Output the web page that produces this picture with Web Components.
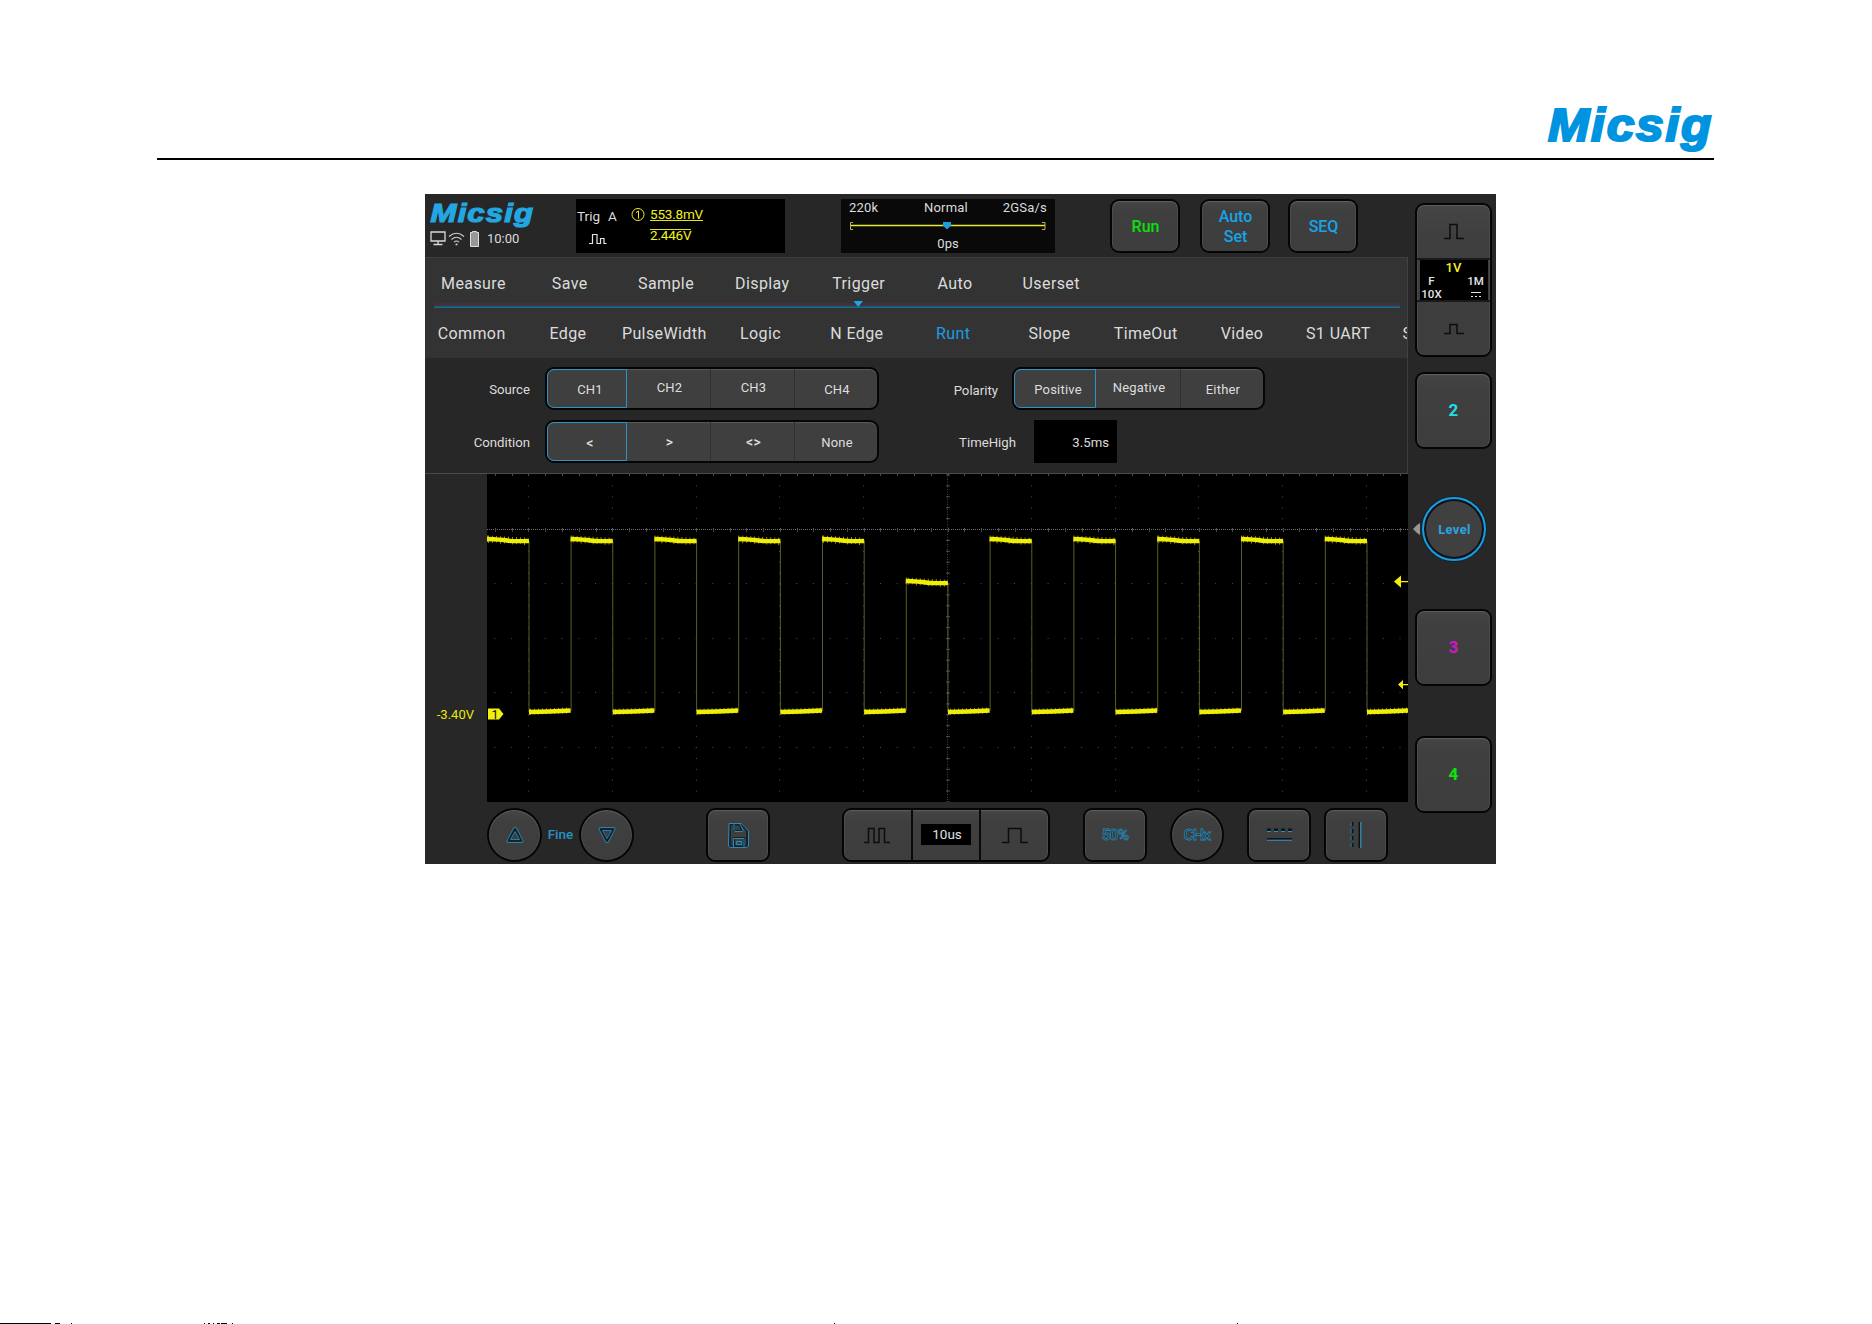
<!DOCTYPE html>
<html lang="en">
<head>
<meta charset="utf-8">
<title>Micsig</title>
<style>
  html, body { margin: 0; padding: 0; }
  body {
    width: 1872px;
    height: 1324px;
    overflow: hidden;
    background: #fff;
    font-family: Roboto, "Liberation Sans", sans-serif;
  }
</style>
</head>
<body>
<manual-page>
  <scope-device></scope-device>
</manual-page>

<script>
class MicsigLogo extends HTMLElement{
    constructor(){
        super();
        this.attachShadow({ mode: "open" });
    }
    connectedCallback(){
        this.shadowRoot.innerHTML = `
        <style>
        :host{ display: block; width: 166px; height: 46px; color: #0093e0; }
        svg{ display: block; width: 100%; height: 100%; overflow: visible; }
        text{ font: italic 700 46px "Liberation Sans", sans-serif; letter-spacing: 1.6px; fill: currentColor; stroke: currentColor; stroke-width: 2.2; }
        </style>
        <svg viewBox="0 0 166 46" preserveAspectRatio="none">
            <text x="1" y="33.5" textLength="165" lengthAdjust="spacingAndGlyphs">Micsig</text>
        </svg>
        `;
    }
}
window.customElements.define("micsig-logo", MicsigLogo);

class ManualPage extends HTMLElement{
    constructor(){
        super();
        this.attachShadow({ mode: "open" });
    }
    connectedCallback(){
        this.shadowRoot.innerHTML = `
        <style>
        :host{ display: flex; flex-direction: column; width: 1872px; height: 1324px; }
        header{
            display: flex;
            justify-content: flex-end;
            align-items: flex-end;
            box-sizing: border-box;
            height: 160px;
            margin: 0 158px 34px 157px;
            padding: 0 1px 5px 0;
            border-bottom: 2px solid #000;
        }
        main{ padding-left: 425px; flex: 1; }
        .edge{ display: block; width: 1872px; height: 1px; }
        </style>
        <header><micsig-logo></micsig-logo></header>
        <main><slot></slot></main>
        <svg class="edge" viewBox="0 0 1872 1" shape-rendering="crispEdges">
            <path d="M0 0h51v1H0zM55 0h5v1h-5zM71 0h1v1h-1zM204 0h1v1h-1zM208 0h2v1h-2zM213 0h1v1h-1zM217 0h3v1h-3zM221 0h6v1h-6zM232 0h1v1h-1zM834 0h1v1h-1zM1237 0h1v1h-1z"/>
        </svg>
        `;
    }
}
window.customElements.define("manual-page", ManualPage);

// raised key: variants square (default) and round
class ScopeKey extends HTMLElement{
    constructor(){
        super();
        this.attachShadow({ mode: "open" });
    }
    connectedCallback(){
        this.shadowRoot.innerHTML = `
        <style>
        :host{
            display: flex;
            align-items: center;
            justify-content: center;
            box-sizing: border-box;
            flex: none;
            width: 64px;
            height: 54px;
            border: 2px solid #050505;
            border-radius: 9px;
            background: linear-gradient(#454545, #3f3f3f 20%, #3d3d3d);
            box-shadow: inset 0 1px 1px #606060, inset 1px 0 1px #4c4c4c, inset -1px 0 1px #4c4c4c;
            text-align: center;
            font-weight: 500;
            font-size: 16px;
            line-height: 20px;
            color: #17a3e8;
        }
        :host([round]){ width: 54px; border-radius: 50%; }
        :host([wide]){ width: 70px; padding: 1px 0 0 1px; }
        :host([channel]){ width: 77px; height: 77px; padding-bottom: 2px; font-weight: 700; font-size: 17px; }
        </style>
        <slot></slot>
        `;
    }
}
window.customElements.define("scope-key", ScopeKey);

class ScopeTabs extends HTMLElement{
    constructor(){
        super();
        this.attachShadow({ mode: "open" });
    }
    connectedCallback(){
        let items = this.getAttribute("items").split(",");
        let active = this.getAttribute("active");
        let fa = items.map(t => `<span class="${t == active ? "on" : ""}">${t}</span>`).join("");
        this.shadowRoot.innerHTML = `
        <style>
        :host{ display: flex; overflow: hidden; height: 50px; font-size: 16px; letter-spacing: .4px; color: #dcdcdc; }
        span{ flex: none; width: 96.3px; line-height: 52px; text-align: center; white-space: nowrap; }
        :host([sub]) .on{ color: #1b9ee2; }
        span:nth-of-type(11){ text-align: left; text-indent: 16px; }
        </style>
        ${fa}
        `;
    }
}
window.customElements.define("scope-tabs", ScopeTabs);

class ScopeSegment extends HTMLElement{
    constructor(){
        super();
        this.attachShadow({ mode: "open" });
    }
    connectedCallback(){
        let items = this.getAttribute("items").split(",");
        this.shadowRoot.innerHTML = `
        <style>
        :host{
            display: flex;
            box-sizing: border-box;
            height: 43px;
            border: 2px solid #050505;
            border-radius: 9px;
            background: #3f3f3f;
            box-shadow: inset 0 1px 1px #5a5a5a;
            font-size: 13px;
            letter-spacing: .2px;
            color: #dedede;
        }
        span{
            display: flex;
            flex: none;
            align-items: center;
            justify-content: center;
            box-sizing: border-box;
            width: var(--cell, 84px);
            padding-top: 2px;
            padding-left: 2px;
            border-right: 1px solid #303030;
        }
        span:first-of-type{ width: var(--first, 80px); padding-left: 6px; }
        span:last-of-type{ width: 82px; border-right: 0; }
        span:nth-of-type(2), span:nth-of-type(3):not(:last-of-type){ padding-bottom: var(--lift, 4px); }
        .on{ border: 1px solid #2b94c4; border-radius: 7px 0 0 7px; }
        .sign{ font-weight: 500; font-size: 14px; }
        </style>
        `;
        items.forEach((t, i) => {
            let s = document.createElement("span");
            s.textContent = t;
            if (i == 0) s.classList.add("on");
            if (/[<>]/.test(t)) s.classList.add("sign");
            this.shadowRoot.appendChild(s);
        });
    }
}
window.customElements.define("scope-segment", ScopeSegment);

// top strip: status, trigger info, timebase, run keys
class ScopeTop extends HTMLElement{
    constructor(){
        super();
        this.attachShadow({ mode: "open" });
    }
    connectedCallback(){
        this.shadowRoot.innerHTML = `
        <style>
        :host{ display: flex; height: 63px; box-sizing: border-box; padding: 5px 50px 0 5px; color: #dcdcdc; font-size: 13px; }
        .brand{ width: 146px; padding-top: 4px; }
        micsig-logo{ width: 104px; height: 26px; color: #22a7e2; }
        .status{ display: flex; align-items: center; height: 17px; margin-top: 1px; font-size: 13px; }
        .status svg{ display: block; }
        .trig{ display: grid; grid-template-columns: 29px 25px 19px 1fr; grid-template-rows: 29px 20px; box-sizing: border-box; width: 209px; height: 54px; padding-left: 1px; background: #000; font-size: 13.5px; }
        .trig span{ line-height: 35px; }
        .trig .y{ color: #f2f21c; }
        .trig .u{ justify-self: start; height: 13px; margin-top: 8px; line-height: 14px; border-bottom: 1px solid #e4e41c; letter-spacing: -.2px; }
        .trig .o{ justify-self: start; height: 13px; margin-top: 1px; line-height: 11px; border-top: 1px solid #e4e41c; letter-spacing: -.2px; }
        .trig .icon{ grid-column: 1 / 4; margin: 5px 0 0 12px; }
        .base{ display: flex; flex-direction: column; box-sizing: border-box; width: 214px; height: 54px; margin-left: 56px; padding: 0 8px; background: #090909; font-size: 13px; }
        .base div{ display: grid; grid-template-columns: 54px 1fr 58px; height: 18px; line-height: 18px; letter-spacing: .2px; text-align: center; }
        .base div :first-child{ text-align: left; }
        .base div :last-child{ text-align: right; }
        .base p{ margin: 0; text-align: center; line-height: 16px; }
        .base svg{ display: block; margin: 4px 0 6px; }
        .run{ margin-left: 55px; color: #0be00b; }
        .auto{ margin-left: 20px; }
        .seq{ margin-left: 18px; }
        </style>
        <div class="brand">
            <micsig-logo></micsig-logo>
            <div class="status">
                <svg style="margin-right:2px" width="16" height="15" fill="none" stroke="#d8d8d8" stroke-width="1.3">
                    <path d="M1 1h14v9H1zM8 10v3M3.500 13.500h9"/>
                </svg>
                <svg style="margin-right:5px" width="17" height="15" fill="none" stroke="#cfcfcf" stroke-width="1.1">
                    <path d="M1 5.500Q8.500 -1 16 5.500M3.500 8.500Q8.500 4 13.500 8.500M6 11Q8.500 9 11 11"/>
                    <path fill="#cfcfcf" stroke="none" d="M7.600 12.500h1.800v1.800H7.600z"/>
                </svg>
                <svg style="margin-right:8px" width="9" height="16">
                    <path fill="#979797" stroke="#dedede" d="M.5 1.500h2v-1h4v1h2v14h-8z"/>
                </svg>
                10:00
            </div>
        </div>
        <div class="trig">
            <span>Trig</span><span style="padding-left:2px">A</span>
            <svg style="margin:8px 0 0" width="15" height="15" fill="none" stroke="#f2f21c">
                <circle cx="7" cy="7.500" r="6"/><path d="M5 5.500 7.500 4v7.500"/>
            </svg>
            <span class="y u">553.8mV</span>
            <svg class="icon" width="18" height="12" fill="none" stroke="#e4e4e4" stroke-width="1.200">
                <path d="M0 10.500h3.500v-9H8v9h3.500v-5H15v5h2.500"/>
            </svg>
            <span class="y o">2.446V</span>
        </div>
        <div class="base">
            <div><span>220k</span><span>Normal</span><span>2GSa/s</span></div>
            <svg width="198" height="9" fill="none">
                <path stroke="#e8e838" stroke-width="1.300" d="M1 4.500h195"/>
                <path stroke="#b8b84a" d="M4 1.500H1.500v7H4M193 1.500h3v7h-3"/>
                <path fill="#1c9ddd" d="M94 1h8v3.500l-4 4-4-4z"/>
            </svg>
            <p>0ps</p>
        </div>
        <scope-key wide class="run">Run</scope-key>
        <scope-key wide class="auto">Auto<br>Set</scope-key>
        <scope-key wide class="seq">SEQ</scope-key>
        `;
    }
}
window.customElements.define("scope-top", ScopeTop);

class ScopeMenu extends HTMLElement{
    constructor(){
        super();
        this.attachShadow({ mode: "open" });
    }
    connectedCallback(){
        this.shadowRoot.innerHTML = `
        <style>
        :host{ display: block; box-sizing: border-box; height: 101px; background: #333; border-top: 1px solid #3e3e3e; border-right: 1px solid #424242; }
        .line{ display: block; margin-left: 9px; }
        scope-tabs[sub]{ margin-left: -1.5px; }
        .first{ height: 43px; padding-left: .3px; overflow: hidden; }
        </style>
        <div class="first"><scope-tabs items="Measure,Save,Sample,Display,Trigger,Auto,Userset" active="Trigger"></scope-tabs></div>
        <svg class="line" width="966" height="7">
            <path fill="#41303f" d="M0 2h966v3H0z"/>
            <path fill="#0d82ad" d="M0 5.500h966v1.200H0z"/>
            <path fill="#18a7ee" d="M419.500 0h9.500l-4.700 6z"/>
        </svg>
        <scope-tabs sub items="Common,Edge,PulseWidth,Logic,N Edge,Runt,Slope,TimeOut,Video,S1 UART,S" active="Runt"></scope-tabs>
        `;
    }
}
window.customElements.define("scope-menu", ScopeMenu);

class ScopePanel extends HTMLElement{
    constructor(){
        super();
        this.attachShadow({ mode: "open" });
    }
    connectedCallback(){
        this.shadowRoot.innerHTML = `
        <style>
        :host{
            display: grid;
            grid-template-columns: 105px 334px 104px 1fr;
            grid-template-rows: 43px 43px;
            column-gap: 15px;
            row-gap: 10px;
            box-sizing: border-box;
            height: 116px;
            padding-top: 9px;
            border-right: 1px solid #3c3c3c;
            border-bottom: 1px solid #4a4a4a;
            font-size: 13.2px;
            color: #dcdcdc;
        }
        label{ text-align: right; line-height: 45px; }
        .pol{ line-height: 48px; }
        .time{ margin-right: -18px; }
        .cond{ --lift: 1px; }
        .three{ --first: 82px; --cell: 85px; margin-left: -1px; }
        scope-segment{ width: max-content; }
        .val{ box-sizing: border-box; width: 83px; margin-left: 21px; padding-right: 8px; background: #000; text-align: right; line-height: 45px; }
        </style>
        <label>Source</label>
        <scope-segment items="CH1,CH2,CH3,CH4"></scope-segment>
        <label class="pol">Polarity</label>
        <scope-segment class="three" items="Positive,Negative,Either"></scope-segment>
        <label>Condition</label>
        <scope-segment class="cond" items="&lt;,&gt;,&lt;&gt;,None"></scope-segment>
        <label class="time">TimeHigh</label>
        <div class="val">3.5ms</div>
        `;
    }
}
window.customElements.define("scope-panel", ScopePanel);

class ScopeWave extends HTMLElement{
    constructor(){
        super();
        this.attachShadow({ mode: "open" });
    }
    // graticule: 83.8px per division across, 54.5px down, centre at 461,55.5
    grid(){
        let d = "";
        for (let i = -5; i <= 5; i++){
            let x = Math.round(461 + i * 83.8) - .5;
            for (let y = 12; y < 328; y += 10.9){
                d += `M${x - .5} ${y.toFixed(1)}h1`;
            }
        }
        for (let j = 1; j <= 4; j++){
            let y = Math.round(55.5 + j * 54.5) - .5;
            for (let i = -27; i <= 27; i++){
                d += `M${(460 + i * 16.76).toFixed(1)} ${y}h1`;
            }
        }
        return d;
    }
    ticks(){
        let d = "";
        for (let i = -27; i <= 27; i++){
            let x = Math.round(460.5 + i * 16.76) + .5;
            d += `M${x} 54v4M${x} 0v2`;
        }
        for (let y = 1; y < 328; y += 10.9){
            d += `M459 ${y.toFixed(1)}h4`;
        }
        return d;
    }
    wave(){
        let thick = "", thin = "", fuzz = "";
        for (let k = 0; k <= 10; k++){
            let fall = 42 + 83.8 * k;
            let rise = k == 0 ? 0 : fall - 42.2;
            let next = k == 10 ? 921 : fall + 41.6;
            // the sixth pulse is the runt
            let top = k == 5 ? 107 : 65;
            thick += `M${rise} ${top}q14 .5 20 1.500t${fall - rise - 20} .4`;
            thick += `M${fall} 238q20 -.2 ${next - fall} -1.500`;
            if (k > 0) thin += `M${rise + .5} 237V${top}`;
            thin += `M${fall} ${top + 2}V238`;
            for (let x = 0; x < 41; x += 1 + (x * 7 + k) % 4){
                fuzz += `M${rise + x + .5} ${top - 3.500 + x / 18}v${6.500 + (x * 5) % 3 / 2}M${fall + x + .5} ${234.800 - x / 30}v${6 + (x * 3) % 3 / 2}`;
            }
        }
        return { thick, thin, fuzz };
    }
    connectedCallback(){
        let w = this.wave();
        this.shadowRoot.innerHTML = `
        <style>
        :host{ display: flex; height: 328px; }
        .gutter{ width: 49px; padding-right: 13px; text-align: right; color: #e8e80e; font-size: 13px; line-height: 481px; }
        .plot{ display: block; background: #000; }
        </style>
        <div class="gutter">-3.40V</div>
        <svg class="plot" width="921" height="328" fill="none">
            <path stroke="#4b4b4b" d="${this.grid()}"/>
            <path stroke="#707070" stroke-dasharray="1 1" d="M0 55.500h921"/>
            <path stroke="#464646" stroke-dasharray="1 1.500" d="M460.500 0v328"/>
            <path stroke="#4c4c4c" d="${this.ticks()}"/>
            <path stroke="#5c5c24" d="${w.thin}"/>
            <path stroke="#8c8c08" d="${w.fuzz}"/>
            <path stroke="#eeee08" stroke-width="4.500" d="${w.thick}"/>
            <path fill="#f0f00c" d="M1 234.500h11l4.500 5.500-4.500 5.500H1zM907 107.500l7-6v5.500h7v1.300h-7v5.500zM911 210.500l5-4.500v4h5v1.200h-5v4z"/>
            <text x="4.500" y="244.500" fill="#111" font-size="12.500">1</text>
        </svg>
        `;
    }
}
window.customElements.define("scope-wave", ScopeWave);

class ScopeBottom extends HTMLElement{
    constructor(){
        super();
        this.attachShadow({ mode: "open" });
    }
    connectedCallback(){
        this.shadowRoot.innerHTML = `
        <style>
        :host{ display: flex; height: 62px; box-sizing: border-box; padding: 6px 0 0 62px; }
        .ball{ width: 55px; }
        .fine{ width: 37px; text-align: center; color: #2791c4; font-size: 13.500px; line-height: 53px; font-weight: 500; }
        .save{ margin-left: 72px; }
        .tb{ width: 208px; margin-left: 72px; margin-right: 33px; align-items: stretch; }
        .tb div{ display: flex; flex: 1; align-items: center; justify-content: center; }
        .tb .mid{ border: solid #0a0a0a; border-width: 0 2px; }
        .tb .mid b{ width: 50px; height: 21px; margin-bottom: 1px; background: #000; color: #e0e0e0; font-weight: 400; font-size: 13.5px; line-height: 21px; text-indent: 2px; }
        .out{ color: #1c2830; font-size: 15.500px; letter-spacing: -.8px; -webkit-text-stroke: .8px #2a86b0; }
        svg{ display: block; fill: none; stroke: #2a93c4; }
        .dark{ stroke: #0c0c0c; stroke-width: 1.500; }
        </style>
        <scope-key round class="ball">
            <svg width="18" height="18"><path stroke="#12202a" stroke-width="2.500" stroke-linejoin="round" d="M9 3.500 15.500 14.500h-13z"/><path stroke-width=".8" d="M9 1.500q1-.5 1.500.5L17 15q0 1.500-1 1.500H2Q.5 16 1 15L7.500 2Q8 1.200 9 1.500zM9 5.500 4.500 13.500h9z"/></svg>
        </scope-key>
        <span class="fine">Fine</span>
        <scope-key round class="ball">
            <svg width="18" height="18" style="transform:rotate(180deg)"><path stroke="#12202a" stroke-width="2.500" stroke-linejoin="round" d="M9 3.500 15.500 14.500h-13z"/><path stroke-width=".8" d="M9 1.500q1-.5 1.500.5L17 15q0 1.500-1 1.500H2Q.5 16 1 15L7.500 2Q8 1.200 9 1.500zM9 5.500 4.500 13.500h9z"/></svg>
        </scope-key>
        <scope-key class="save">
            <svg width="23" height="27">
                <path stroke="#14222c" stroke-width="2" d="M3 2.500h12l5 6v16H3zM7 24v-8h10v8M7 3v6h8l-2-6"/>
                <path stroke-width=".9" d="M2 1.500h12.500l7 7.500v14q0 2.500-2.500 2.500H4Q1.500 25.500 1.500 23zM6.500 25v-8.500h10.500V25M9.500 19.500h5v3h-5zM7 2v6.500q0 1 1 1h7.500q1 0 .5-1.500L13 2"/>
            </svg>
        </scope-key>
        <scope-key class="tb">
            <div><svg class="dark" width="26" height="17"><path d="M0 15.500h4.500v-14H10v14h5v-14h5.500v14H26"/></svg></div>
            <div class="mid"><b>10us</b></div>
            <div><svg class="dark" width="26" height="17"><path d="M0 15.500h6.500v-14H19v14h7"/></svg></div>
        </scope-key>
        <scope-key><span class="out">50%</span></scope-key>
        <scope-key round style="margin:0 23px"><span class="out">CHx</span></scope-key>
        <scope-key>
            <svg width="25" height="14"><path stroke="#0c161c" stroke-width="3" stroke-dasharray="4 3" d="M0 2h25"/><path stroke="#111" stroke-width="1.500" d="M0 10.800h25"/><path stroke-dasharray="4 3" d="M0 3.500H25"/><path d="M0 12.300h25"/></svg>
        </scope-key>
        <scope-key style="margin-left:13px">
            <svg width="14" height="26"><path stroke="#0c161c" stroke-width="3" stroke-dasharray="4 3" d="M3 0v26"/><path stroke="#111" stroke-width="1.500" d="M10.300 0v26"/><path stroke-dasharray="4 3" d="M2 0v26"/><path stroke-width="1.200" d="M11.800 0v26"/></svg>
        </scope-key>
        `;
    }
}
window.customElements.define("scope-bottom", ScopeBottom);

class ScopeSide extends HTMLElement{
    constructor(){
        super();
        this.attachShadow({ mode: "open" });
    }
    connectedCallback(){
        this.shadowRoot.innerHTML = `
        <style>
        :host{ display: flex; flex-direction: column; box-sizing: border-box; width: 88px; height: 670px; padding: 9px 0 0 7px; }
        .ch1{ flex-direction: column; justify-content: flex-start; width: 77px; height: 154px; }
        .ch1 > div{ display: flex; align-items: center; justify-content: center; width: 100%; height: 53px; }
        .ch1 svg{ fill: none; stroke: #0c0c0c; stroke-width: 1.500; }
        .ch1 .info{
            display: grid;
            grid-template-columns: 25px 1fr 25px;
            grid-template-rows: 14px 13px 13px;
            box-sizing: border-box;
            height: 44px;
            padding: 0 2px;
            border: solid #1a1a1a;
            border-width: 2px 0;
            background: linear-gradient(#000, #000) center / 68px 40px no-repeat;
            color: #e4e4e4;
            font-size: 11.500px;
            font-weight: 500;
            line-height: 14px;
            justify-items: center;
        }
        .info b{ grid-column: 1 / 4; color: #f2f21c; font-size: 13px; line-height: 15px; font-weight: 500; }
        .ch1 .info svg{ stroke: #e4e4e4; stroke-width: 1; }
        .ch2{ margin-top: 15px; color: #1adfe6; }
        .ch3{ margin-top: 48px; color: #cb18c4; }
        .ch4{ margin-top: 50px; color: #0be40b; }
        .row{ display: flex; align-items: center; margin: 48px 0 0 -2px; }
        .level{
            display: flex;
            align-items: center;
            justify-content: center;
            box-sizing: border-box;
            width: 64px;
            height: 64px;
            margin-left: 2px;
            padding-left: 1px;
            border: 2px solid #189ee0;
            border-radius: 50%;
            background: #404040;
            box-shadow: inset 0 0 0 2px #07121a, 0 0 0 1px #0d2230;
            color: #2aa5e0;
            font-weight: 700;
            font-size: 13px;
            letter-spacing: .3px;
        }
        </style>
        <scope-key class="ch1">
            <div><svg width="20" height="17"><path d="M0 15.500h6v-14h7v14h7"/></svg></div>
            <div class="info">
                <b>1V</b>
                <span>F</span><i></i><span>1M</span>
                <span>10X</span><i></i><svg width="12" height="11"><path d="M1 4.500h10"/><path stroke-dasharray="2 2" d="M1 8.500h10"/></svg>
            </div>
            <div><svg width="20" height="12"><path d="M0 10.500h6v-9h7v9h7"/></svg></div>
        </scope-key>
        <scope-key channel class="ch2">2</scope-key>
        <div class="row">
            <svg width="7" height="12"><path fill="#969696" d="M7 0v12L4 10 0 6l4-4z"/></svg>
            <div class="level">Level</div>
        </div>
        <scope-key channel class="ch3">3</scope-key>
        <scope-key channel class="ch4">4</scope-key>
        `;
    }
}
window.customElements.define("scope-side", ScopeSide);

class ScopeDevice extends HTMLElement{
    constructor(){
        super();
        this.attachShadow({ mode: "open" });
    }
    connectedCallback(){
        this.shadowRoot.innerHTML = `
        <style>
        :host{ display: grid; grid-template-columns: 983px 88px; width: 1071px; height: 670px; background: #272727; }
        .left{ display: flex; flex-direction: column; }
        </style>
        <div class="left">
            <scope-top></scope-top>
            <scope-menu></scope-menu>
            <scope-panel></scope-panel>
            <scope-wave></scope-wave>
            <scope-bottom></scope-bottom>
        </div>
        <scope-side></scope-side>
        `;
    }
}
window.customElements.define("scope-device", ScopeDevice);
</script>
</body>
</html>
